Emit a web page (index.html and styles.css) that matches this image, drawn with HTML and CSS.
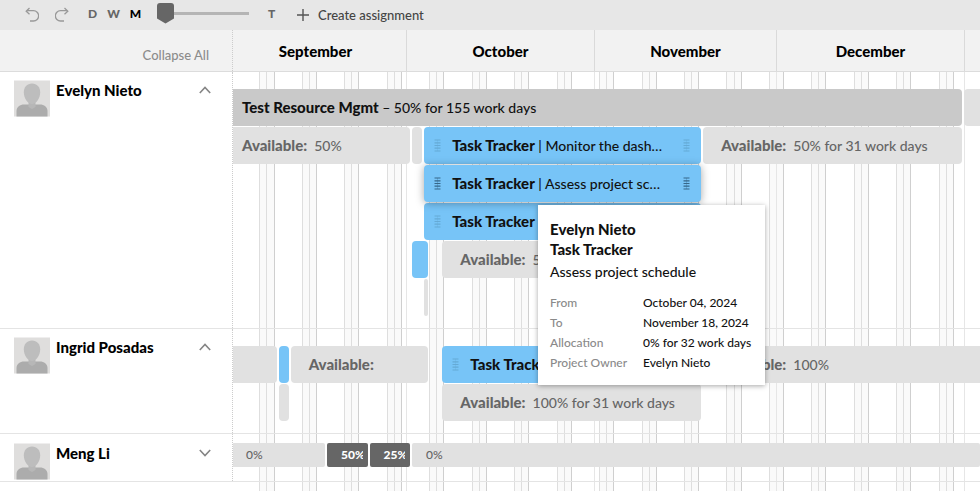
FILE: index.html
```html
<!DOCTYPE html>
<html lang="en">
<head>
<meta charset="utf-8">
<title>Resource schedule</title>
<link rel="stylesheet" href="styles.css">
</head>
<body>
<svg class="defs" aria-hidden="true">
  <symbol id="person" viewBox="0 0 36 36">
    <rect width="36" height="36" fill="#dfdedd"/>
    <path d="M2.500 36v-5.500c0-4 3.500-6.500 7.500-6.500h16c4 0 7.500 2.500 7.500 6.500V36z" fill="#acacac"/>
    <path d="M14.500 21h7v5.500l-3.500 2-3.500-2z" fill="#b7b7b7"/>
    <path d="M18 3c5 0 8.200 3.500 8.200 8.800C26.200 18 22 23.500 18 23.500S9.800 18 9.800 11.800C9.800 6.500 13 3 18 3z" fill="#bdbdbd"/>
  </symbol>
  <symbol id="grip" viewBox="0 0 7 13">
    <path d="M0.500 1h6M0.500 3.800h6M0.500 6.500h6M0.500 9.200h6M0.500 12h6" stroke="currentColor" stroke-width="1.200" fill="none"/>
    <path d="M3.500 1v11" stroke="currentColor" stroke-width="1" opacity="0.300"/>
  </symbol>
  <symbol id="up" viewBox="0 0 12 8"><path d="M0.800 7 6 1.500 11.200 7" fill="none" stroke="#858585" stroke-width="1.600"/></symbol>
  <symbol id="down" viewBox="0 0 12 8"><path d="M0.800 1 6 6.500 11.200 1" fill="none" stroke="#858585" stroke-width="1.600"/></symbol>
</svg>

<header class="toolbar">
  <div class="group history">
    <button aria-label="Undo"><svg width="14" height="16" viewBox="0 0 14 16"><path d="M4.500 1 1.200 4.200 4.500 7.200M1.200 3.700H8.500a4.700 4.700 0 0 1 0 10.300H5" fill="none" stroke="#999" stroke-width="1.300"/></svg></button>
    <button aria-label="Redo"><svg width="14" height="16" viewBox="0 0 14 16"><path d="M9.500 1l3.300 3.200-3.300 3M12.800 3.700H5.500a4.700 4.700 0 0 0 0 10.300H9" fill="none" stroke="#999" stroke-width="1.300"/></svg></button>
  </div>
  <div class="group scale">
    <button>D</button>
    <button>W</button>
    <button class="current">M</button>
  </div>
  <input class="zoom" type="range" min="0" max="100" value="0" aria-label="Zoom">
  <button class="today">T</button>
  <button class="create"><svg width="12" height="12" viewBox="0 0 12 12"><path d="M6 0v12M0 6h12" stroke="#555" stroke-width="1.400"/></svg>Create assignment</button>
</header>

<main class="board">
  <div class="row head">
    <div class="side"><button class="collapse">Collapse All</button></div>
    <div class="lane">
      <div class="months">
        <span>September</span><span>October</span><span>November</span><span>December</span><span></span>
      </div>
    </div>
  </div>

  <div class="body">
    <div class="backdrop" aria-hidden="true">
      <div class="weeks">
        <i></i><i></i><i></i><i></i><i></i><i></i><i></i><i></i><i></i><i></i><i></i><i></i><i></i><i></i><i></i><i></i><i></i><i></i>
      </div>
      <div class="months"><span></span><span></span><span></span><span></span><span></span></div>
    </div>

    <section class="row">
      <div class="side">
        <svg class="avatar"><use href="#person"/></svg>
        <h2>Evelyn Nieto</h2>
        <button class="toggle" aria-label="Collapse Evelyn Nieto"><svg width="12" height="8"><use href="#up"/></svg></button>
      </div>
      <div class="lane">
        <div class="track">
          <div class="bar project" style="grid-area: 1 / 1 / 2 / 123"><p><b>Test Resource Mgmt</b> – 50% for 155 work days</p></div>
          <div class="bar free runs-on" style="grid-area: 1 / 123 / 2 / 124"></div>

          <div class="bar free" style="grid-area: 2 / 1 / 3 / 32"><p><b>Available:</b>&nbsp; 50%</p></div>
          <div class="bar free" style="grid-area: 2 / 32 / 3 / 34"></div>
          <div class="bar task" style="grid-area: 2 / 34 / 3 / 80"><svg class="grip"><use href="#grip"/></svg><p><b>Task Tracker</b> | Monitor the dash…</p><svg class="grip"><use href="#grip"/></svg></div>
          <div class="bar free" style="grid-area: 2 / 80 / 3 / 123"><p><b>Available:</b>&nbsp; 50% for 31 work days</p></div>

          <div class="bar task hovered" style="grid-area: 3 / 34 / 4 / 80"><svg class="grip"><use href="#grip"/></svg><p><b>Task Tracker</b> | Assess project sc…</p><svg class="grip"><use href="#grip"/></svg></div>

          <div class="bar task" style="grid-area: 4 / 34 / 5 / 80"><svg class="grip"><use href="#grip"/></svg><p><b>Task Tracker</b></p><svg class="grip"><use href="#grip"/></svg></div>

          <div class="bar task" style="grid-area: 5 / 32 / 6 / 35"></div>
          <div class="bar free" style="grid-area: 5 / 37 / 6 / 80"><p><b>Available:</b>&nbsp; 50%</p></div>

          <div class="bar free" style="grid-area: 6 / 34 / 7 / 35"></div>
        </div>
      </div>
    </section>

    <section class="row">
      <div class="side">
        <svg class="avatar"><use href="#person"/></svg>
        <h2>Ingrid Posadas</h2>
        <button class="toggle" aria-label="Collapse Ingrid Posadas"><svg width="12" height="8"><use href="#up"/></svg></button>
      </div>
      <div class="lane">
        <div class="track">
          <div class="bar free" style="grid-area: 1 / 1 / 2 / 10"></div>
          <div class="bar task" style="grid-area: 1 / 10 / 2 / 12"></div>
          <div class="bar free" style="grid-area: 1 / 12 / 2 / 35"><p><b>Available:</b></p></div>
          <div class="bar task" style="grid-area: 1 / 37 / 2 / 80"><svg class="grip"><use href="#grip"/></svg><p><b>Task Tracker</b></p><svg class="grip"><use href="#grip"/></svg></div>
          <div class="bar free runs-on" style="grid-area: 1 / 80 / 2 / 124"><p><b>Available:</b>&nbsp; 100%</p></div>

          <div class="bar free" style="grid-area: 2 / 10 / 3 / 12"></div>
          <div class="bar free" style="grid-area: 2 / 37 / 3 / 80"><p><b>Available:</b>&nbsp; 100% for 31 work days</p></div>
        </div>
      </div>
    </section>

    <section class="row closed">
      <div class="side">
        <svg class="avatar"><use href="#person"/></svg>
        <h2>Meng Li</h2>
        <button class="toggle" aria-label="Expand Meng Li"><svg width="12" height="8"><use href="#down"/></svg></button>
      </div>
      <div class="lane">
        <div class="track">
          <div class="bar free from-edge" style="grid-area: 1 / 1 / 2 / 18"><p>0%</p></div>
          <div class="bar load" style="grid-area: 1 / 18 / 2 / 25"><p>50%</p></div>
          <div class="bar load" style="grid-area: 1 / 25 / 2 / 32"><p>25%</p></div>
          <div class="bar free runs-on" style="grid-area: 1 / 32 / 2 / 124"><p>0%</p></div>
        </div>
      </div>
    </section>

    <aside class="tooltip" role="tooltip">
      <h3>Evelyn Nieto</h3>
      <h3>Task Tracker</h3>
      <p>Assess project schedule</p>
      <dl>
        <dt>From</dt><dd>October 04, 2024</dd>
        <dt>To</dt><dd>November 18, 2024</dd>
        <dt>Allocation</dt><dd>0% for 32 work days</dd>
        <dt>Project Owner</dt><dd>Evelyn Nieto</dd>
      </dl>
    </aside>
  </div>
</main>
</body>
</html>
```
FILE: styles.css
```css
* { box-sizing: border-box; }

html, body { height: 100%; }

body {
  display: flex;
  flex-direction: column;
  margin: 0;
  overflow: hidden;
  background: #fff;
  color: #111;
  font: 500 14px/20px Lato, "Open Sans", sans-serif;
}

h2, h3, p, dl, dd { margin: 0; }

button {
  display: flex;
  align-items: center;
  padding: 0;
  border: 0;
  background: none;
  color: #666;
  font: inherit;
}

.defs { position: absolute; width: 0; height: 0; }

/* Toolbar */
.toolbar {
  display: flex;
  flex: none;
  align-items: center;
  height: 30px;
  padding: 0 25px;
  background: #e7e7e7;
}

.group { display: flex; align-items: center; }
.history { gap: 16px; width: 63px; }
.scale { gap: 10px; width: 67px; padding-bottom: 2px; }
.scale button, .today { font-size: 12px; font-weight: 900; }
.scale .current { color: #000; }

.zoom {
  width: 92px;
  height: 22px;
  margin: 0 19px 4px 2px;
  appearance: none;
  background: linear-gradient(#b5b5b5, #b5b5b5) center / 100% 3px no-repeat;
}

.zoom::-webkit-slider-thumb {
  width: 17px;
  height: 21px;
  appearance: none;
  border-radius: 3px;
  background: #666;
  clip-path: polygon(0 0, 100% 0, 100% 76%, 50% 100%, 0 76%);
}

.today { width: 29px; padding-bottom: 2px; }
.create { gap: 9px; color: #444; font-size: 13px; }

/* Rows */
.board { display: flex; flex: 1; flex-direction: column; }

.row {
  display: grid;
  grid-template-columns: 232px minmax(0, 1fr);
  border-bottom: 1px solid #e4e4e4;
}

.side { display: flex; align-items: flex-start; padding: 8px 20px 0 14px; }
.lane { overflow: hidden; border-left: 1px dotted #ccc; }

.head { height: 42px; border-bottom: 1px solid #dcdcdc; background: #f2f2f2; }
.head .side { align-items: center; justify-content: flex-end; padding: 8px 23px 0; }
.collapse { color: #8c8c8c; font-size: 13px; }

.months {
  display: grid;
  grid-template-columns: 30fr 31fr 30fr 31fr 16px;
  height: 100%;
  margin-left: -9px;
}

.months span {
  display: flex;
  align-items: center;
  justify-content: center;
  border-left: 1px solid #dadada;
  color: #000;
  font-size: 15px;
  font-weight: 900;
}

.body { position: relative; flex: 1; }

.avatar { width: 36px; height: 37px; margin-right: 6px; }
.side h2 { flex: 1; color: #000; font-size: 15px; font-weight: 900; line-height: 20px; }
.toggle { width: 12px; height: 20px; margin-right: 1px; }

/* Weekend stripes and month edges behind the rows */
.backdrop {
  position: absolute;
  z-index: -1;
  inset: 0 0 0 232px;
  overflow: hidden;
}

.weeks {
  display: grid;
  grid-template-columns: repeat(17, 7fr) 3fr;
  height: 100%;
  margin: 0 16px 0 -8px;
}

.weeks i { display: flex; justify-content: space-between; }
.weeks i::before,
.weeks i::after {
  width: 14.286%;
  border-left: 1px solid #dedede;
  background: #fafafa;
  content: "";
}
.weeks i::before { border-right: 1px solid #cfcfcf; }
.weeks i:last-child::before { width: 33.333%; }
.weeks i:last-child::after { display: none; }

.backdrop .months { position: absolute; inset: 0; margin-left: -8px; }
.backdrop .months span { border-color: #e6e6e6; }

/* One grid column for each day, September 1 to December 31 */
.track {
  display: grid;
  grid-template-columns: repeat(122, minmax(0, 1fr)) 16px;
  grid-auto-rows: 37px;
  row-gap: 1px;
  margin-left: -9px;
  padding: 17px 0 12px;
}

.bar {
  display: flex;
  align-items: center;
  min-width: 0;
  margin-right: 2px;
  overflow: hidden;
  border-radius: 4px;
  white-space: nowrap;
}

.bar p { flex: 1; min-width: 0; padding-left: 18px; overflow: hidden; text-overflow: ellipsis; }
.bar b { font-size: 15px; font-weight: 900; }

.project { background: #c9c9c9; }
.free { background: #e1e1e1; color: #666; }
.task { background: #77c4f7; }
.task p { padding: 0 0 0 11px; }
.hovered { z-index: 1; box-shadow: 0 1px 8px rgba(0, 0, 0, 0.35); }
.runs-on { margin-right: 0; border-radius: 4px 0 0 4px; }

.grip { flex: none; width: 7px; height: 13px; margin: 0 11px 0 10px; color: #65aad6; }
.grip:first-child { margin-right: 0; }
.grip:last-child { margin-left: 0; }
.hovered .grip { color: #37678a; }

.closed .side { padding-top: 9px; }
.closed .track { grid-auto-rows: 24px; padding: 9px 0 14px; }
.closed .bar { border-radius: 2px; font-size: 12px; }
.closed .bar p { padding-left: 14px; text-overflow: clip; }
.closed .from-edge { margin-left: 8px; }
.load { padding-right: 5px; background: #666; color: #fff; font-weight: 900; }

/* Assignment details */
.tooltip {
  position: absolute;
  z-index: 2;
  top: 133px;
  left: 538px;
  padding: 14px 14px 12px 12px;
  background: #fff;
  box-shadow: 0 1px 5px rgba(0, 0, 0, 0.35);
}

.tooltip h3 { font-size: 15px; font-weight: 900; line-height: 20px; }
.tooltip p { padding-top: 3px; }
.tooltip dl {
  display: grid;
  grid-template-columns: 93px auto;
  margin-top: 11px;
  font-size: 12px;
}
.tooltip dt { color: #8a8a8a; }
```
